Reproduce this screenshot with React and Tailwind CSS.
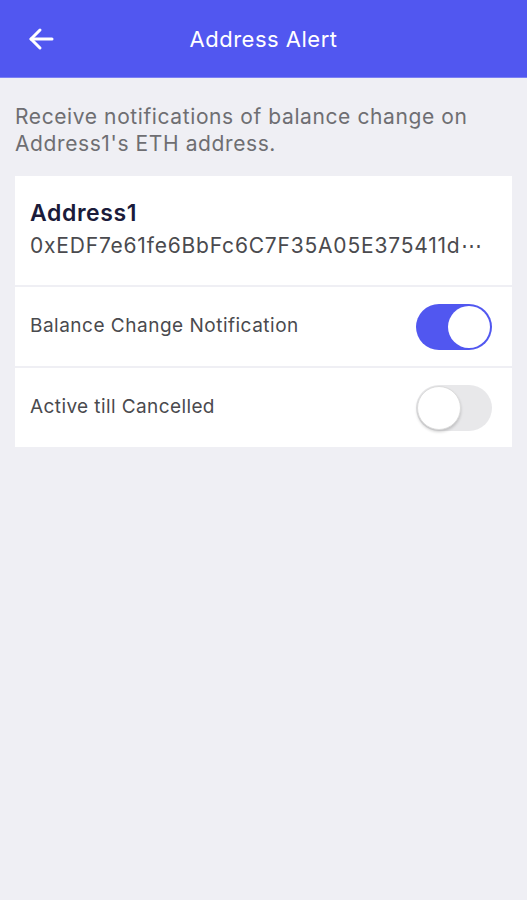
import React from "react";

function Toggle({ on }) {
  return on ? (
    <div className="w-[76px] h-[46px] rounded-full bg-[#5157F0] flex items-center justify-end pr-[2px]">
      <div className="w-[42px] h-[42px] rounded-full bg-white" />
    </div>
  ) : (
    <div className="w-[76px] h-[46px] rounded-full bg-[#e8e8ea] flex items-center justify-start pl-[1px]">
      <div className="w-[44px] h-[44px] rounded-full bg-white border border-[#dcdcdc] shadow-[0_2px_3px_rgba(0,0,0,0.18)]" />
    </div>
  );
}

export default function App() {
  return (
    <div className="w-[527px] h-[900px] bg-[#EFEFF4] flex flex-col" style={{ fontFamily: "Inter, 'Open Sans', sans-serif" }}>
      <div className="h-[78px] bg-[#5157F0] flex items-center relative shrink-0 border-b border-[#7b80f4]">
        <div className="absolute left-[28px] top-[27px]">
          <svg width="26" height="24" viewBox="0 0 26 24" fill="none" stroke="white" strokeWidth="3" strokeLinecap="round" strokeLinejoin="round">
            <path d="M24 12H3" />
            <path d="M12 3L3 12l9 9" />
          </svg>
        </div>
        <div className="w-full text-center text-white text-[22px] leading-none tracking-[0.5px]">Address Alert</div>
      </div>
      <div className="px-[15px] pt-[25px] text-[21px] leading-[27px] text-[#6e6e72] tracking-[0.6px]">
        Receive notifications of balance change on Address1's ETH address.
      </div>
      <div className="mx-[15px] mt-[19px] bg-white">
        <div className="px-[15px] pt-[22px] pb-[24px] border-b-2 border-[#EFEFF4]">
          <div className="text-[23px] font-semibold text-[#1b1b3a] leading-[30px] tracking-[0.6px]">Address1</div>
          <div className="text-[21px] text-[#4a4a4e] leading-[30px] mt-[3px] whitespace-nowrap tracking-[0.8px]">0xEDF7e61fe6BbFc6C7F35A05E375411d⋯</div>
        </div>
        <div className="h-[81px] px-[15px] pr-[20px] flex items-center justify-between border-b-2 border-[#EFEFF4]">
          <span className="text-[19px] text-[#4a4a4e] tracking-[0.5px]">Balance Change Notification</span>
          <Toggle on />
        </div>
        <div className="h-[79px] px-[15px] pr-[20px] flex items-center justify-between">
          <span className="text-[19px] text-[#4a4a4e] tracking-[0.4px]">Active till Cancelled</span>
          <Toggle />
        </div>
      </div>
    </div>
  );
}
